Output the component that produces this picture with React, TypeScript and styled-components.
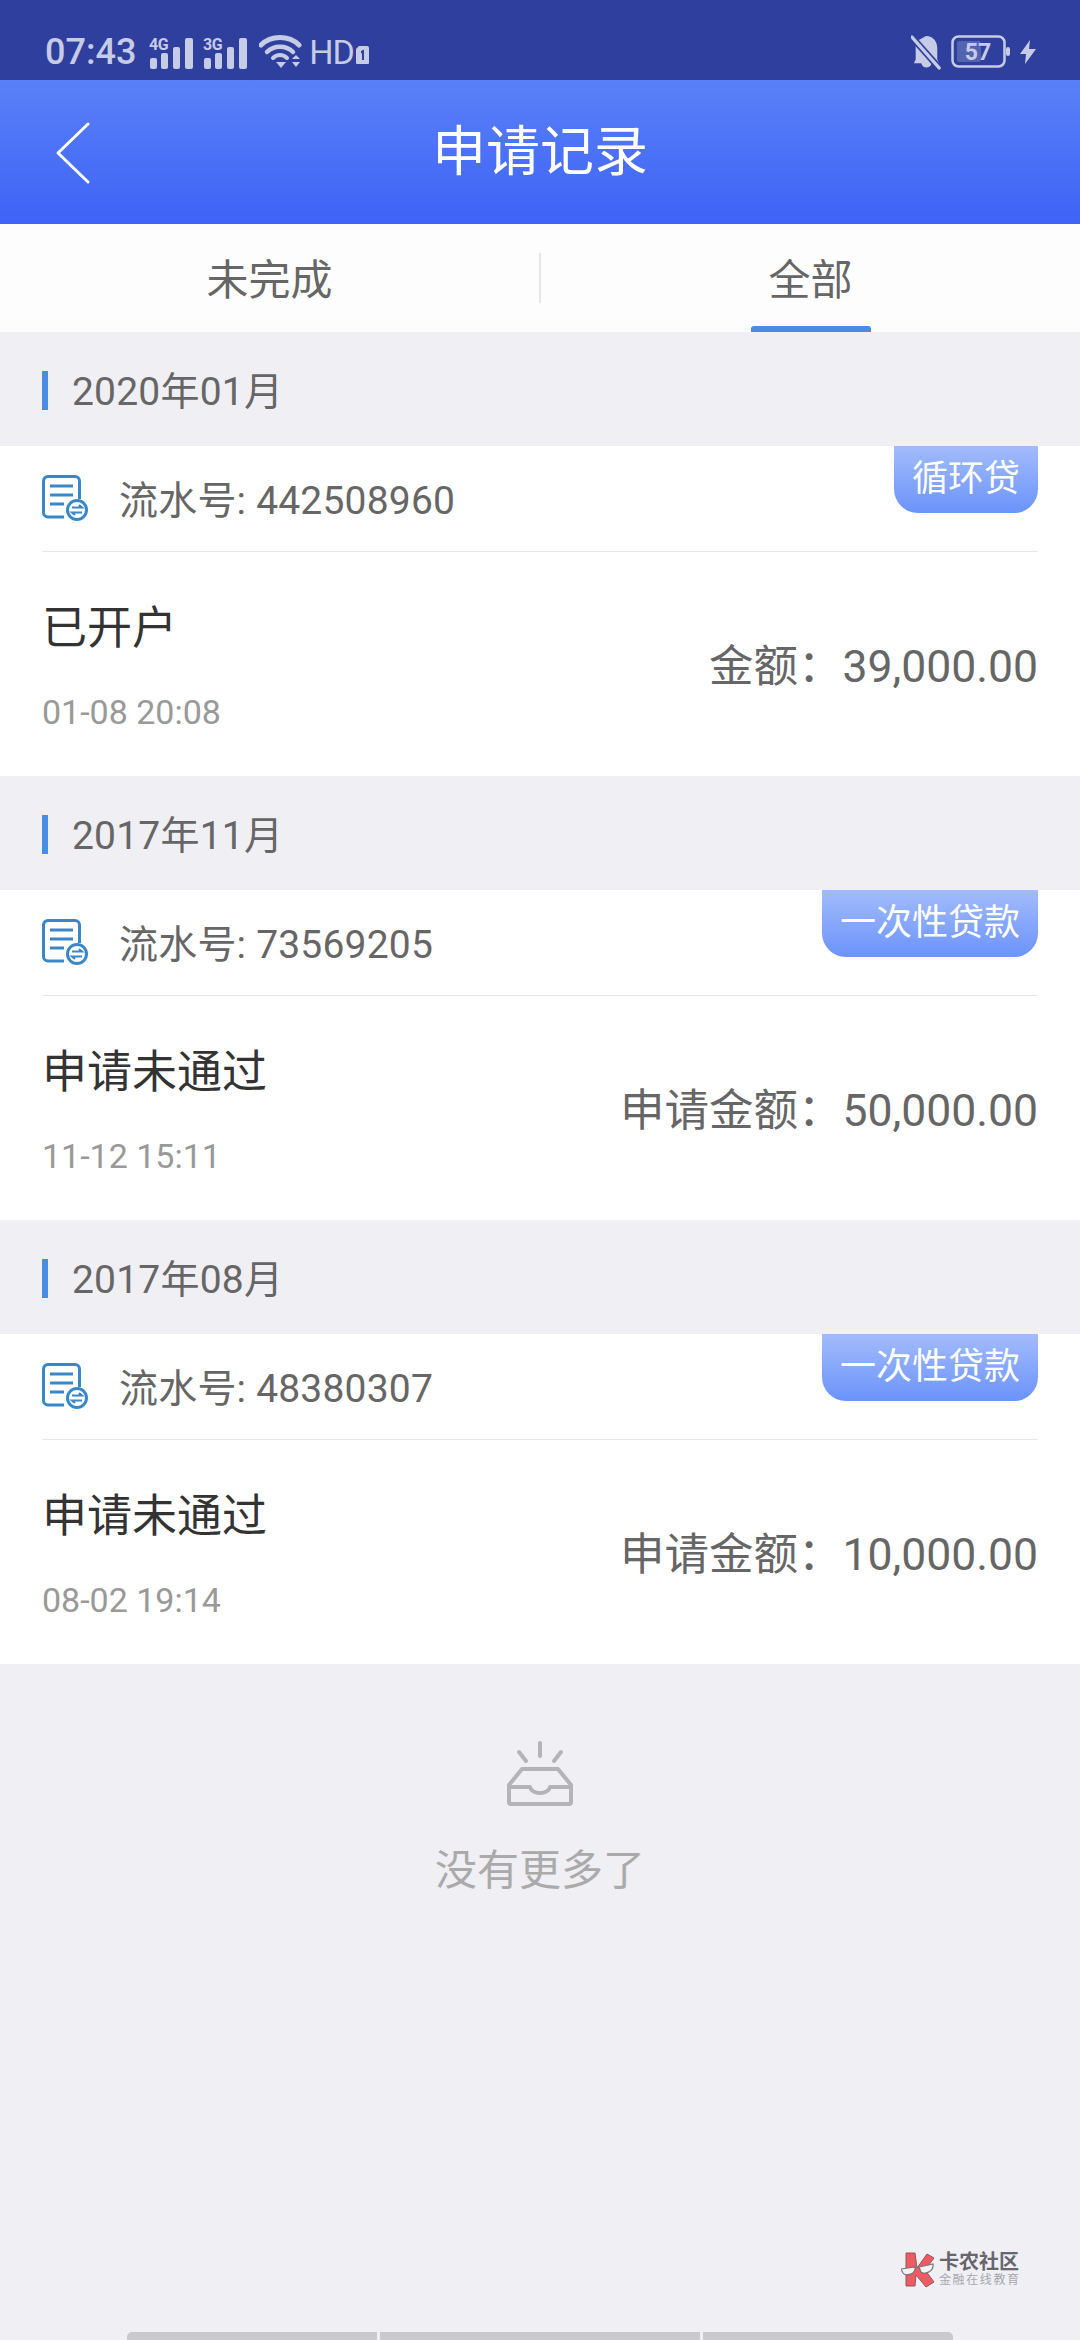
import React from 'react';
import styled, { createGlobalStyle } from 'styled-components';

const Global = createGlobalStyle`
  html, body { margin: 0; padding: 0; background: #efeff4; }
  body { font-family: Roboto, "Noto Sans CJK SC", sans-serif; }
  * { box-sizing: border-box; }
`;

const Page = styled.div`
  position: relative;
  width: 1080px;
  height: 2340px;
  overflow: hidden;
  background: #efeff4;
  display: flex;
  flex-direction: column;
`;

const StatusBar = styled.div`
  height: 80px;
  flex: none;
  background: #2f3f9d;
  color: #c6cbe6;
  display: flex;
  align-items: center;
  justify-content: space-between;
  padding: 24px 43px 0 45px;
`;
const StatusGroup = styled.div`
  display: flex;
  align-items: center;
`;
const Clock = styled.span`
  font-size: 36px;
  font-weight: 500;
  margin-right: 13px;
`;
const Hd = styled.span`
  font-size: 34px;
  line-height: 1;
  margin-left: 6px;
  letter-spacing: -1px;
`;

const Header = styled.header`
  height: 144px;
  flex: none;
  position: relative;
  background: linear-gradient(180deg, #5a80f8 0%, #3e63f6 100%);
  display: flex;
  align-items: center;
  justify-content: center;
`;
const BackButton = styled.svg`
  position: absolute;
  left: 55px;
  top: 41px;
`;
const Title = styled.h1`
  margin: 0;
  font-size: 54px;
  font-weight: 400;
  color: #fff;
  line-height: 1;
  transform: translateY(1px);
`;

const Tabs = styled.nav`
  height: 108px;
  flex: none;
  background: #fdfdfd;
  display: flex;
  align-items: center;
  position: relative;
`;
const Tab = styled.div<{ $active?: boolean }>`
  flex: 1;
  height: 100%;
  display: flex;
  align-items: center;
  justify-content: center;
  font-size: 42px;
  color: #666;
  position: relative;
  padding-bottom: 4px;
  ${p => p.$active ? `
    &::after {
      content: '';
      position: absolute;
      left: 210px;
      bottom: 0;
      width: 120px;
      height: 6px;
      border-radius: 3px 3px 0 0;
      background: #4a8be4;
    }` : ''}
`;
const TabDivider = styled.div`
  flex: none;
  width: 2px;
  height: 50px;
  background: #e6e6e6;
`;

const DateHead = styled.div`
  height: 114px;
  display: flex;
  align-items: center;
  padding: 0 42px;
  gap: 24px;
  font-size: 39px;
  color: #666;
`;
const DateMark = styled.span`
  width: 6px;
  height: 39px;
  margin-top: 2px;
  background: #4a8be4;
`;
const DateLabel = styled.span`
  letter-spacing: 0.2px;
  transform: translateY(-1px);
`;

const Card = styled.article`
  height: 330px;
  background: #fff;
  position: relative;
`;
const CardHead = styled.div`
  height: 106px;
  margin: 0 42px;
  border-bottom: 1px solid #e6e6e6;
  display: flex;
  align-items: center;
  gap: 31px;
  font-size: 39px;
  color: #666;
  letter-spacing: 0.2px;
`;
const SerialText = styled.span`
  transform: translateY(-2px);
`;
const Tag = styled.div`
  position: absolute;
  top: 0;
  right: 42px;
  height: 67px;
  padding: 0 18px 10px;
  display: flex;
  align-items: center;
  border-radius: 0 0 24px 24px;
  background: linear-gradient(180deg, #a2bbfb 0%, #6b93fb 100%);
  color: #fff;
  font-size: 36px;
`;
const CardBody = styled.div`
  height: 224px;
  padding: 0 42px;
  display: flex;
  align-items: center;
  justify-content: space-between;
`;
const StatusCol = styled.div`
  display: flex;
  flex-direction: column;
  gap: 33px;
  padding-top: 3px;
`;
const StatusText = styled.div`
  font-size: 45px;
  line-height: 60px;
  color: #333;
`;
const TimeText = styled.div`
  font-size: 34px;
  line-height: 40px;
  color: #999;
`;
const Amount = styled.div`
  font-size: 44.5px;
  color: #666;
  white-space: nowrap;
  transform: translateY(-2px);
`;

const Empty = styled.div`
  padding-top: 77px;
  display: flex;
  flex-direction: column;
  align-items: center;
  gap: 29px;
  color: #aaa;
  font-size: 42px;
`;
const Spacer = styled.div`
  flex: 1;
`;
const HomeBar = styled.div`
  flex: none;
  height: 8px;
  padding: 0 127px;
  display: flex;
  gap: 3px;
`;
const HomeSeg = styled.div<{ $w: number }>`
  width: ${p => p.$w}px;
  background: #c9c9ce;
  &:first-child { border-top-left-radius: 5px; }
  &:last-child { border-top-right-radius: 5px; }
`;

const Watermark = styled.div`
  position: absolute;
  left: 901px;
  top: 2251px;
  display: flex;
  align-items: center;
  gap: 4px;
`;
const MarkText = styled.div`
  display: flex;
  flex-direction: column;
`;
const MarkTitle = styled.span`
  font-size: 20px;
  line-height: 22px;
  font-weight: 700;
  color: #66666c;
`;
const MarkSub = styled.span`
  font-size: 12px;
  line-height: 15px;
  letter-spacing: 1.6px;
  color: #a8a8ae;
`;

const Signal = ({ label }: { label: string }) => (
  <svg width="46" height="40" viewBox="0 -6 46 40" style={{ display: 'block', marginRight: 8 }}>
    <text x="0" y="12" fontFamily="Roboto" fontWeight="700" fontSize="16" letterSpacing="-0.5" fill="#c6cbe6">{label}</text>
    <rect x="1" y="20" width="7" height="11" rx="2" fill="#c6cbe6" />
    <rect x="12" y="15" width="7" height="16" rx="2" fill="#c6cbe6" />
    <rect x="24" y="9" width="7" height="22" rx="2" fill="#c6cbe6" />
    <rect x="36" y="0" width="8" height="31" rx="2" fill="#c6cbe6" />
  </svg>
);

const Wifi = () => (
  <svg width="44" height="36" viewBox="0 0 44 36" fill="none" stroke="#c6cbe6" strokeLinecap="round" style={{ display: 'block', marginLeft: 2 }}>
    <path d="M2 11 C 12 1, 30 1, 40 11" strokeWidth="5" />
    <path d="M8 18 C 15 11, 27 11, 34 18" strokeWidth="4.5" />
    <path d="M14 24 C 18 20, 24 20, 28 24" strokeWidth="4" />
    <path d="M17 28 h10 l-5 6 z" fill="#c6cbe6" stroke="none" />
    <path d="M33 25 l4 -4 l4 4 z M33 28 h8 l-4 5 z" fill="#c6cbe6" stroke="none" />
  </svg>
);

const SimOne = () => (
  <svg width="13" height="20" viewBox="0 0 13 20" style={{ display: 'block', marginTop: 6, marginLeft: 2 }}>
    <path d="M3 1 h8 a2 2 0 0 1 2 2 v15 a1 1 0 0 1 -1 1 H1 a1 1 0 0 1 -1 -1 V4 z" fill="#c6cbe6" />
    <path d="M5 6 l3 -1.5 V15 H6 V8 L5 8.5 z" fill="#2f3f9d" />
  </svg>
);

const BellOff = () => (
  <svg width="30" height="36" viewBox="0 0 32 38" style={{ display: 'block', marginRight: 10 }}>
    <path d="M16 2 C 24 2, 28 8, 28 15 V27 L30 31 H22 C 21 37, 12 37, 11 31 H3 L5 27 V8 Z" fill="#c6cbe6" />
    <path d="M0 2 L30 36" stroke="#2f3f9d" strokeWidth="7" />
    <path d="M1 3 L30 36" stroke="#c6cbe6" strokeWidth="3.5" strokeLinecap="round" />
  </svg>
);

const Battery = () => (
  <svg width="60" height="34" viewBox="0 0 60 34" style={{ display: 'block', marginRight: 9 }}>
    <rect x="1.5" y="1.5" width="52" height="30" rx="6" fill="none" stroke="#c6cbe6" strokeWidth="2.5" />
    <rect x="6" y="6" width="24" height="21" rx="2" fill="#5463b0" />
    <rect x="55" y="12" width="4" height="9" rx="2" fill="#c6cbe6" />
    <text x="27" y="25" textAnchor="middle" fontFamily="Roboto" fontWeight="700" fontSize="23" fill="#c6cbe6">57</text>
  </svg>
);

const Bolt = () => (
  <svg width="17" height="24" viewBox="0 0 17 24" style={{ display: 'block' }}>
    <path d="M10 0 L0 14 H6 L5 24 L16 9 H9 Z" fill="#c6cbe6" />
  </svg>
);

const SerialIcon = () => (
  <svg width="46" height="46" viewBox="0 0 46 46" fill="none" style={{ display: 'block', flex: 'none', marginTop: -2 }}>
    <path d="M22 42 H6 a4.5 4.5 0 0 1 -4.5 -4.5 V6 a4.5 4.5 0 0 1 4.5 -4.5 H33 a4.5 4.5 0 0 1 4.5 4.5 V24" stroke="#3a87c8" strokeWidth="3" />
    <path d="M8 11 H31 M8 20 H31 M8 29 H22" stroke="#3a87c8" strokeWidth="3" />
    <circle cx="35" cy="35" r="9.5" stroke="#3a87c8" strokeWidth="3" fill="#fff" />
    <path d="M30 32.5 H40 L37 30 M40 37.5 H30 L33 40" stroke="#3a87c8" strokeWidth="2" />
  </svg>
);

const EmptyIcon = () => (
  <svg width="68" height="66" viewBox="0 0 68 66" fill="none" stroke="#b4b4b8" strokeWidth="4" strokeLinecap="round" strokeLinejoin="round" style={{ display: 'block' }}>
    <path d="M34 2 V15 M13 11 L20 20 M55 11 L48 20" />
    <path d="M16 28 H52 L65 44 V61 a2 2 0 0 1 -2 2 H5 a2 2 0 0 1 -2 -2 V44 Z" />
    <path d="M3 46 H24 C 26 54, 42 54, 44 46 H65" />
  </svg>
);

const MarkLogo = () => (
  <svg width="34" height="36" viewBox="0 0 34 36" style={{ display: 'block' }}>
    <path d="M5 1 H14 L16 16 L26 2 L33 6 L24 18 L33 30 L25 35 L15 23 L14 34 H5 Z" fill="#ef5a63" stroke="#8a5a5e" strokeWidth="1" />
    <path d="M0 17 L14 15 C 15 22, 5 25, 2 21 Z M18 15 L32 12 C 33 20, 23 23, 20 20 Z" fill="#f4f2f2" stroke="#777" strokeWidth="1.2" />
  </svg>
);

const records = [
  { month: '2020年01月', serial: '442508960', tag: '循环贷', status: '已开户', time: '01-08 20:08', amount: '金额：39,000.00' },
  { month: '2017年11月', serial: '73569205', tag: '一次性贷款', status: '申请未通过', time: '11-12 15:11', amount: '申请金额：50,000.00' },
  { month: '2017年08月', serial: '48380307', tag: '一次性贷款', status: '申请未通过', time: '08-02 19:14', amount: '申请金额：10,000.00' },
];

export default function App() {
  return (
    <Page>
      <Global />
      <StatusBar>
        <StatusGroup>
          <Clock>07:43</Clock>
          <Signal label="4G" />
          <Signal label="3G" />
          <Wifi />
          <Hd>HD</Hd>
          <SimOne />
        </StatusGroup>
        <StatusGroup>
          <BellOff />
          <Battery />
          <Bolt />
        </StatusGroup>
      </StatusBar>
      <Header>
        <BackButton width="36" height="64" viewBox="0 0 36 64" fill="none">
          <path d="M33 3 L3 32 L33 61" stroke="#fff" strokeWidth="3" strokeLinecap="round" strokeLinejoin="round" />
        </BackButton>
        <Title>申请记录</Title>
      </Header>
      <Tabs>
        <Tab>未完成</Tab>
        <TabDivider />
        <Tab $active>全部</Tab>
      </Tabs>
      {records.map(r => (
        <section key={r.serial}>
          <DateHead>
            <DateMark />
            <DateLabel>{r.month}</DateLabel>
          </DateHead>
          <Card>
            <CardHead>
              <SerialIcon />
              <SerialText>流水号: {r.serial}</SerialText>
            </CardHead>
            <Tag>{r.tag}</Tag>
            <CardBody>
              <StatusCol>
                <StatusText>{r.status}</StatusText>
                <TimeText>{r.time}</TimeText>
              </StatusCol>
              <Amount>{r.amount}</Amount>
            </CardBody>
          </Card>
        </section>
      ))}
      <Empty>
        <EmptyIcon />
        <span>没有更多了</span>
      </Empty>
      <Spacer />
      <HomeBar>
        <HomeSeg $w={250} />
        <HomeSeg $w={320} />
        <HomeSeg $w={250} />
      </HomeBar>
      <Watermark>
        <MarkLogo />
        <MarkText>
          <MarkTitle>卡农社区</MarkTitle>
          <MarkSub>金融在线教育</MarkSub>
        </MarkText>
      </Watermark>
    </Page>
  );
}
